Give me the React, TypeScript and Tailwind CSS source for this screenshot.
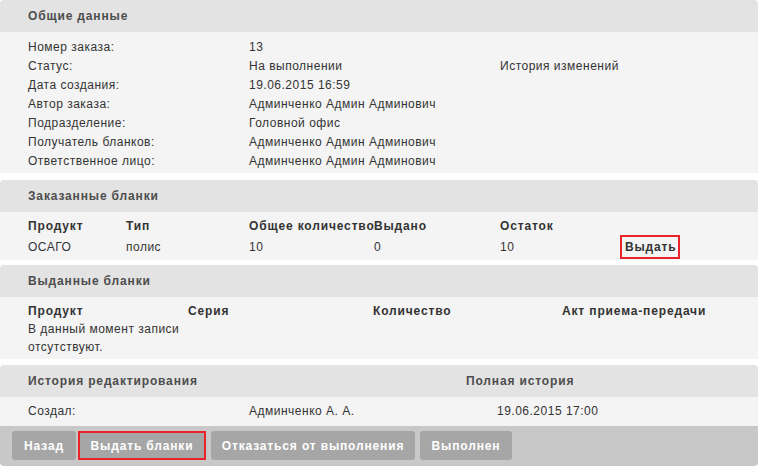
import React from 'react';

const font = { fontFamily: '"Liberation Sans", Arial, sans-serif' };

const Header: React.FC<{ children: React.ReactNode }> = ({ children }) => (
  <div className="h-[32px] bg-[#e3e3e3] rounded-t-[4px] flex items-center pl-[28px] text-[12px] font-bold tracking-[0.85px] text-[#4d4d4d]">
    {children}
  </div>
);

const general: [string, string, string?][] = [
  ['Номер заказа:', '13'],
  ['Статус:', 'На выполнении', 'История изменений'],
  ['Дата создания:', '19.06.2015 16:59'],
  ['Автор заказа:', 'Админченко Админ Админович'],
  ['Подразделение:', 'Головной офис'],
  ['Получатель бланков:', 'Админченко Админ Админович'],
  ['Ответственное лицо:', 'Админченко Админ Админович'],
];

export default function App() {
  return (
    <div className="w-[758px] bg-white text-[12px] text-[#333] tracking-[0.5px]" style={font}>
      {/* Общие данные */}
      <div className="mb-[7px]">
        <Header>Общие данные</Header>
        <div className="bg-[#f4f4f4] pt-[6px] pb-[2px] pl-[28px]">
          {general.map(([label, value, extra]) => (
            <div key={label} className="grid grid-cols-[221px_251px_1fr] leading-[19px]">
              <span>{label}</span>
              <span>{value}</span>
              <span>{extra ?? ''}</span>
            </div>
          ))}
        </div>
      </div>

      {/* Заказанные бланки */}
      <div className="mb-[5px]">
        <Header>Заказанные бланки</Header>
        <div className="bg-[#f4f4f4] pt-[5px] pb-[1px] pl-[28px]">
          <div className="grid grid-cols-[98px_123px_125px_126px_120px_1fr] leading-[18px] font-bold tracking-[0.85px]">
            <span>Продукт</span>
            <span>Тип</span>
            <span className="whitespace-nowrap">Общее количество</span>
            <span>Выдано</span>
            <span>Остаток</span>
            <span />
          </div>
          <div className="grid grid-cols-[98px_123px_125px_126px_120px_1fr] h-[24px] items-center leading-[18px]">
            <span>ОСАГО</span>
            <span>полис</span>
            <span>10</span>
            <span>0</span>
            <span>10</span>
            <span>
              <span className="inline-block w-[60px] h-[24px] border-2 border-[#e8232a] pl-[3px] leading-[20px] font-bold tracking-[0.85px]">
                Выдать
              </span>
            </span>
          </div>
        </div>
      </div>

      {/* Выданные бланки */}
      <div className="mb-[6px]">
        <Header>Выданные бланки</Header>
        <div className="bg-[#f4f4f4] pt-[5px] pb-[3px] pl-[28px]">
          <div className="grid grid-cols-[160px_185px_189px_1fr] leading-[18px] font-bold tracking-[0.85px]">
            <span>Продукт</span>
            <span>Серия</span>
            <span>Количество</span>
            <span>Акт приема-передачи</span>
          </div>
          <div className="grid grid-cols-[160px_185px_189px_1fr] leading-[18px]">
            <span>В данный момент записи отсутствуют.</span>
            <span />
            <span />
            <span />
          </div>
        </div>
      </div>

      {/* История редактирования */}
      <div>
        <div className="h-[32px] bg-[#e3e3e3] rounded-t-[4px] grid grid-cols-[438px_1fr] items-center pl-[28px] text-[12px] font-bold tracking-[0.85px] text-[#4d4d4d]">
          <span>История редактирования</span>
          <span>Полная история</span>
        </div>
        <div className="bg-[#f4f4f4] pt-[5px] pb-[6px] pl-[28px] grid grid-cols-[221px_248px_1fr] leading-[18px]">
          <span>Создал:</span>
          <span>Админченко А. А.</span>
          <span>19.06.2015 17:00</span>
        </div>
        <div className="bg-[#c8c8c8] rounded-b-[4px] h-[40px] pl-[12px] pt-[5px] flex items-start text-white font-bold tracking-[0.85px]">
          <button className="w-[64px] h-[29px] rounded-[3px] bg-[#a6a6a6]">Назад</button>
          <button className="ml-[2px] w-[128px] h-[29px] bg-[#a6a6a6] border-2 border-[#e8232a]">Выдать бланки</button>
          <button className="ml-[5px] w-[204px] h-[29px] rounded-[3px] bg-[#a6a6a6]">Отказаться от выполнения</button>
          <button className="ml-[5px] w-[92px] h-[29px] rounded-[3px] bg-[#a6a6a6]">Выполнен</button>
        </div>
      </div>
    </div>
  );
}
